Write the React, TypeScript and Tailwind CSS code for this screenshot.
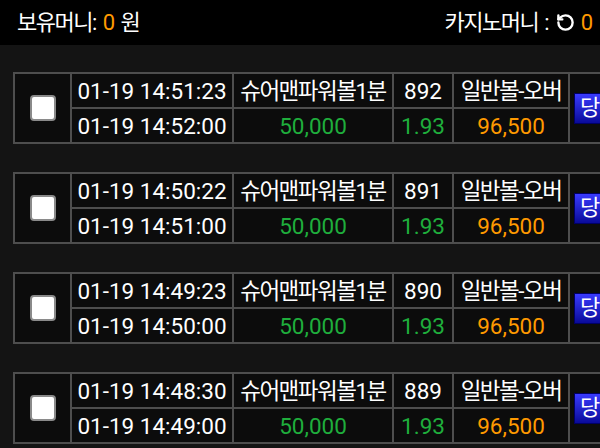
import React from "react";
import { RotateCcw } from "lucide-react";

interface BetRow {
  betTime: string;
  resultTime: string;
  game: string;
  round: number;
  pick: string;
  amount: string;
  odds: string;
  payout: string;
}

const rows: BetRow[] = [
  { betTime: "01-19 14:51:23", resultTime: "01-19 14:52:00", game: "슈어맨파워볼1분", round: 892, pick: "일반볼-오버", amount: "50,000", odds: "1.93", payout: "96,500" },
  { betTime: "01-19 14:50:22", resultTime: "01-19 14:51:00", game: "슈어맨파워볼1분", round: 891, pick: "일반볼-오버", amount: "50,000", odds: "1.93", payout: "96,500" },
  { betTime: "01-19 14:49:23", resultTime: "01-19 14:50:00", game: "슈어맨파워볼1분", round: 890, pick: "일반볼-오버", amount: "50,000", odds: "1.93", payout: "96,500" },
  { betTime: "01-19 14:48:30", resultTime: "01-19 14:49:00", game: "슈어맨파워볼1분", round: 889, pick: "일반볼-오버", amount: "50,000", odds: "1.93", payout: "96,500" },
];

const font = { fontFamily: "Roboto, 'Noto Sans CJK KR', sans-serif" };

const cell = "border-2 border-[#4e4e4e] p-0 text-center whitespace-nowrap";

const BetTable: React.FC<{ row: BetRow }> = ({ row }) => (
  <table className="border-collapse bg-[#0c0c0c] text-[22.5px] leading-[20px] text-white table-fixed w-[640px]">
    <colgroup>
      <col className="w-[57px]" />
      <col className="w-[162px]" />
      <col className="w-[160px]" />
      <col className="w-[60px]" />
      <col className="w-[116px]" />
      <col />
    </colgroup>
    <tbody>
      <tr className="h-[35px]">
        <td rowSpan={2} className={cell}>
          <div className="mx-auto w-[26px] h-[26px] rounded-[4px] bg-white border-2 border-[#8a8a8a]" />
        </td>
        <td className={cell}>{row.betTime}</td>
        <td className={`${cell} tracking-[-1.5px]`}>{row.game}</td>
        <td className={cell}>{row.round}</td>
        <td className={`${cell} tracking-[-1.5px]`}>{row.pick}</td>
        <td rowSpan={2} className={`${cell} text-left pl-[4px]`}>
          <button className="h-[31px] pl-[5px] pr-[6px] bg-gradient-to-b from-[#3a3aff] to-[#0a0a9a] border border-[#000066] text-white text-[22px] leading-none">
            당첨
          </button>
        </td>
      </tr>
      <tr className="h-[35px]">
        <td className={cell}>{row.resultTime}</td>
        <td className={`${cell} text-[#1fae3c]`}>{row.amount}</td>
        <td className={`${cell} text-[#1fae3c]`}>{row.odds}</td>
        <td className={`${cell} text-[#ff9a00]`}>{row.payout}</td>
      </tr>
    </tbody>
  </table>
);

export default function App() {
  return (
    <div className="w-[600px] h-[448px] overflow-hidden bg-[#141414]" style={font}>
      <div className="h-[45px] bg-black flex items-center justify-between pl-[17px] pr-[7px] text-[22px] leading-[22px] text-white">
        <div>
          <span className="tracking-[-1.5px]">보유머니</span>: <span className="text-[#ff9a00]">0</span> 원
        </div>
        <div className="flex items-center gap-[6px]">
          <span className="tracking-[-1.5px]">카지노머니</span>
          <span>:</span>
          <RotateCcw size={19} strokeWidth={3} color="white" />
          <span className="text-[#ff9a00]">0</span>
        </div>
      </div>
      <div className="flex flex-col gap-[28px] pl-[13px] pt-[27px]">
        {rows.map((r) => (
          <BetTable key={r.round} row={r} />
        ))}
      </div>
    </div>
  );
}
